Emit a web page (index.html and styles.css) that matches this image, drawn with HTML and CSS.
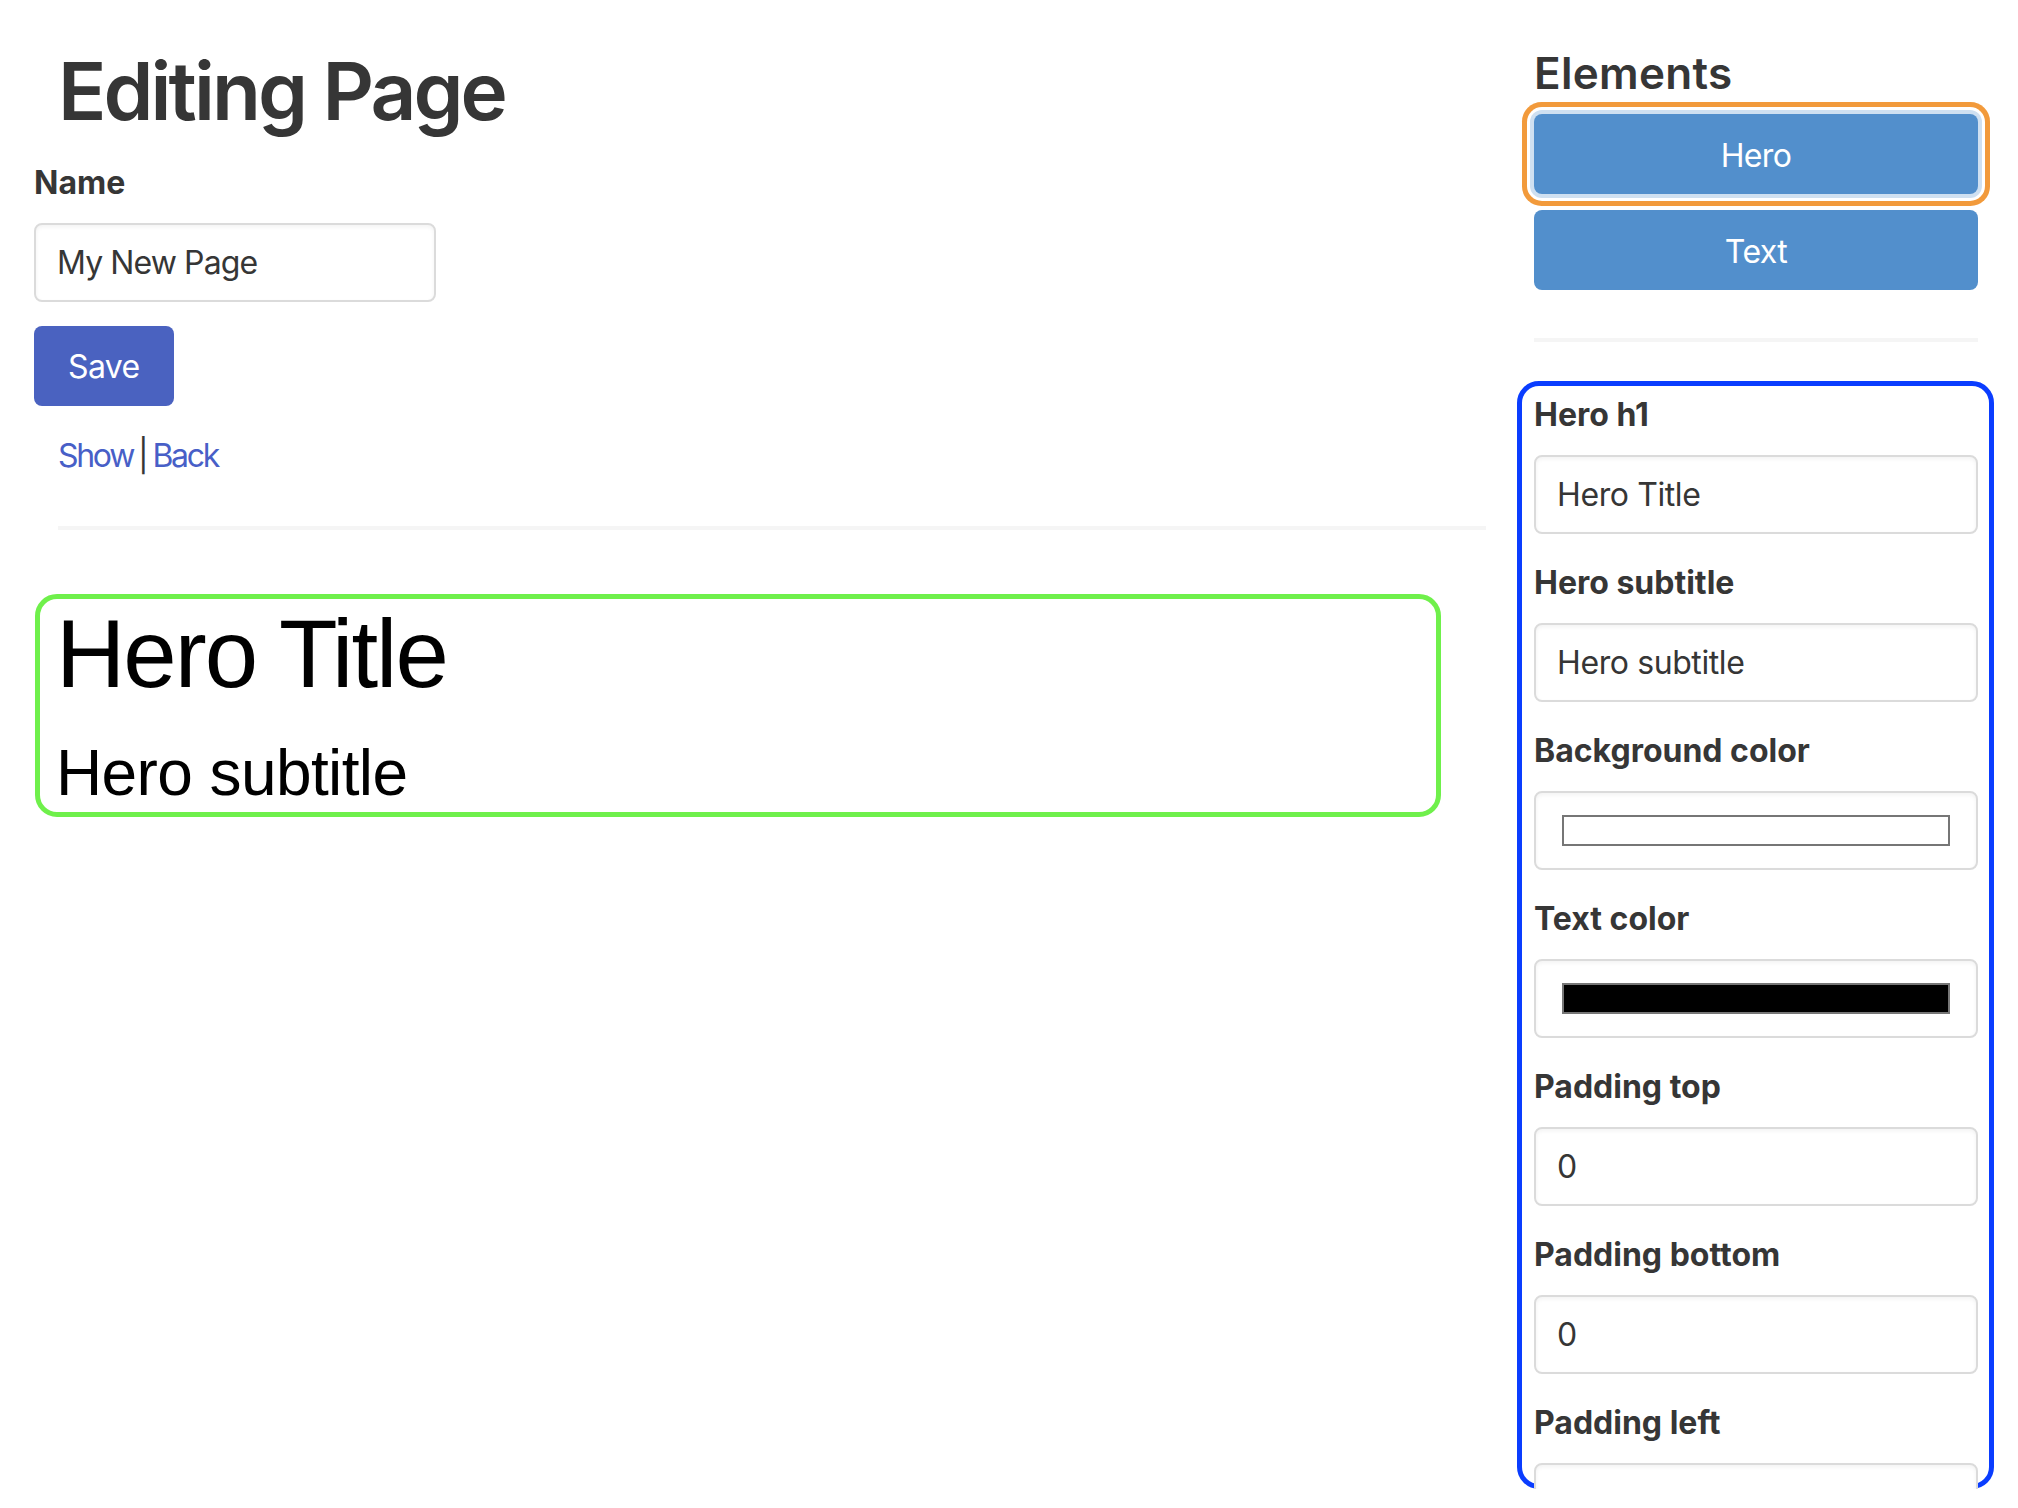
FILE: index.html
```html
<!DOCTYPE html>
<html lang="en">
<head>
<meta charset="utf-8">
<title>Editing Page</title>
<link rel="stylesheet" href="styles.css">
</head>
<body>
<div class="page">
  <main class="main">
    <h1 class="title">Editing Page</h1>
    <form class="form">
      <div class="field">
        <label class="label">Name</label>
        <input class="input" type="text" value="My New Page">
      </div>
      <button type="button" class="button-save">Save</button>
    </form>
    <div class="links"><a href="#" class="link">Show</a><span class="sep">|</span><a href="#" class="link">Back</a></div>
    <hr class="rule main-rule">
    <div class="preview">
      <h1 class="hero-title">Hero Title</h1>
      <p class="hero-subtitle">Hero subtitle</p>
    </div>
  </main>
  <aside class="sidebar">
    <h2 class="side-title">Elements</h2>
    <button type="button" class="element-btn is-focused">Hero</button>
    <button type="button" class="element-btn">Text</button>
    <hr class="rule side-rule">
    <div class="props">
      <div class="field">
        <label class="label">Hero h1</label>
        <input class="input" type="text" value="Hero Title">
      </div>
      <div class="field">
        <label class="label">Hero subtitle</label>
        <input class="input" type="text" value="Hero subtitle">
      </div>
      <div class="field">
        <label class="label">Background color</label>
        <div class="input color-input"><span class="swatch swatch-white"></span></div>
      </div>
      <div class="field">
        <label class="label">Text color</label>
        <div class="input color-input"><span class="swatch swatch-black"></span></div>
      </div>
      <div class="field">
        <label class="label">Padding top</label>
        <input class="input" type="text" value="0">
      </div>
      <div class="field">
        <label class="label">Padding bottom</label>
        <input class="input" type="text" value="0">
      </div>
      <div class="field">
        <label class="label">Padding left</label>
        <input class="input" type="text" value="0">
      </div>
    </div>
  </aside>
</div>
</body>
</html>
```

FILE: styles.css
```css
html {
  overflow: hidden;
}

body {
  margin: 0;
  background: #fff;
  color: #363636;
  font-family: Inter, "Noto Sans", sans-serif;
  font-size: 32px;
  line-height: 48px;
}

.page {
  display: flex;
  align-items: flex-start;
  gap: 48px;
  padding: 46px 40px 0 34px;
}

.main {
  flex: 1;
  min-width: 0;
}

.title {
  margin: 0 0 0 24px;
  font-size: 80px;
  line-height: 90px;
  font-weight: 600;
  color: #363636;
  letter-spacing: -2.9px;
}

.form {
  margin-top: 23px;
}

.field {
  margin-bottom: 25px;
}

.label {
  display: block;
  font-weight: 700;
  font-size: 32px;
  line-height: 48px;
  margin-bottom: 16px;
  color: #363636;
}

.input {
  display: block;
  box-sizing: border-box;
  width: 100%;
  height: 79px;
  margin: 0;
  padding: 0 21px;
  border: 2px solid #dbdbdb;
  border-radius: 8px;
  background: #fff;
  box-shadow: inset 0 2px 4px rgba(10, 10, 10, 0.05);
  font-family: Inter, "Noto Sans", sans-serif;
  font-size: 32px;
  letter-spacing: -0.4px;
  color: #363636;
  outline: none;
}

.main .input {
  width: 402px;
  letter-spacing: -0.9px;
}

.main .field {
  margin-bottom: 24px;
}

.button-save {
  display: block;
  height: 80px;
  padding: 0 34px;
  border: 0;
  border-radius: 8px;
  background: #4a62c0;
  color: #fff;
  font-family: Inter, "Noto Sans", sans-serif;
  font-size: 32px;
  letter-spacing: -0.6px;
}

.links {
  margin-top: 26px;
  padding-left: 24px;
  line-height: 48px;
  letter-spacing: -2.3px;
}

.link {
  color: #485fc7;
  text-decoration: none;
}

.sep {
  margin: 0 6px 0 5px;
  color: #363636;
}

.rule {
  border: 0;
  height: 4px;
  background: #f5f5f5;
  margin: 46px 0 0;
}

.main-rule {
  margin-left: 24px;
}

.preview {
  margin: 64px 0 0 1px;
  width: 1406px;
  box-sizing: border-box;
  border: 5px solid #6ff04b;
  border-radius: 22px;
  padding: 1px 16px 3px;
  color: #000;
  font-family: "Liberation Sans", Arial, sans-serif;
}

.hero-title {
  margin: 0;
  font-size: 96px;
  line-height: 107px;
  font-weight: 400;
  letter-spacing: -2px;
}

.hero-subtitle {
  margin: 30px 0 0;
  font-size: 64px;
  line-height: 72px;
  letter-spacing: -0.6px;
}

.sidebar {
  width: 444px;
  flex: none;
}

.side-title {
  margin: 2px 0 0;
  font-size: 44px;
  line-height: 50px;
  font-weight: 600;
  color: #363636;
  letter-spacing: 0.3px;
}

.element-btn {
  display: block;
  width: 100%;
  height: 80px;
  margin-top: 16px;
  border: 0;
  border-radius: 8px;
  background: #528fcc;
  color: #fff;
  font-family: Inter, "Noto Sans", sans-serif;
  font-size: 32px;
  line-height: 82px;
  letter-spacing: -0.6px;
}

.element-btn.is-focused {
  box-shadow: 0 0 0 4px #cfe0f1, 0 0 0 7px #fff, 0 0 0 12px #f29a3b;
}

.side-rule {
  margin-top: 48px;
}

.props {
  box-sizing: border-box;
  margin: 39px 0 0 -17px;
  width: 477px;
  height: 1108px;
  border: 5px solid #0a3dff;
  border-radius: 22px;
  padding: 5px 11px 0 12px;
}

.color-input {
  display: flex;
  align-items: center;
  padding: 0 26px;
}

.swatch {
  flex: 1;
  height: 31px;
  box-sizing: border-box;
  border: 2px solid #767676;
}

.swatch-white {
  background: #fff;
}

.swatch-black {
  background: #000;
}
```
